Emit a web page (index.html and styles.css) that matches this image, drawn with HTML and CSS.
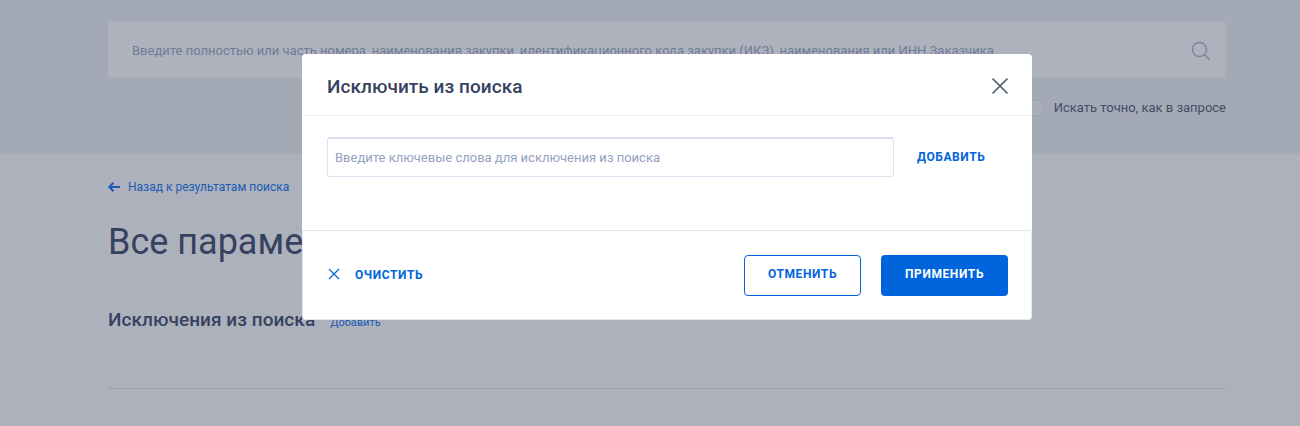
FILE: index.html
```html
<!DOCTYPE html>
<html lang="ru">
<head>
<meta charset="utf-8">
<title>Исключить из поиска</title>
<link rel="stylesheet" href="styles.css">
</head>
<body>
<header class="top">
  <div class="search">
    <span class="search-text">Введите полностью или часть номера, наименования закупки, идентификационного кода закупки (ИКЗ), наименования или ИНН Заказчика</span>
    <svg class="search-icon" width="20" height="20" viewBox="0 0 20 20" fill="none"><circle cx="8.5" cy="8.5" r="7" stroke="#7b8599" stroke-width="1.4"/><path d="M13.5 13.5L18.5 18.5" stroke="#7b8599" stroke-width="1.4"/></svg>
  </div>
  <div class="exact">
    <span class="checkbox"></span>
    <span>Искать точно, как в запросе</span>
  </div>
</header>
<main class="content">
  <a class="back">
    <svg width="12" height="10" viewBox="0 0 12 10" fill="none"><path d="M12 5H1.5M5.5 0.8L1.3 5L5.5 9.2" stroke="#1c5bb5" stroke-width="2"/></svg>
    <span>Назад к результатам поиска</span>
  </a>
  <h1 class="title">Все параметры поиска</h1>
  <div class="section">
    <h2 class="section-title">Исключения из поиска</h2>
    <a class="section-add">Добавить</a>
  </div>
  <hr class="rule">
</main>
<section class="modal">
  <div class="modal-head">
    <h3 class="modal-title">Исключить из поиска</h3>
    <svg class="modal-close" width="16" height="16" viewBox="0 0 16 16" fill="none"><path d="M0.5 0.5L15.5 15.5M15.5 0.5L0.5 15.5" stroke="#5d6679" stroke-width="1.7"/></svg>
  </div>
  <div class="modal-body">
    <div class="field">Введите ключевые слова для исключения из поиска</div>
    <a class="add">ДОБАВИТЬ</a>
  </div>
  <div class="modal-foot">
    <a class="clear">
      <svg class="clear-icon" width="12" height="12" viewBox="0 0 12 12" fill="none"><path d="M1 1L11 11M11 1L1 11" stroke="#0065dd" stroke-width="1.2"/></svg>
      <span>ОЧИСТИТЬ</span>
    </a>
    <div class="actions">
      <button class="btn btn-outline">ОТМЕНИТЬ</button>
      <button class="btn btn-solid">ПРИМЕНИТЬ</button>
    </div>
  </div>
</section>
</body>
</html>
```
FILE: styles.css
```css
* { box-sizing: border-box; }
html, body { margin: 0; height: 426px; overflow: hidden; }
body { background: #adb1bc; font-family: Roboto, "Liberation Sans", sans-serif; color: #3a4560; position: relative; }
.top { height: 154px; background: #a3a9b5; padding: 22px 74px 0 108px; }
.search { height: 56px; background: #adb2bd; display: flex; align-items: center; justify-content: space-between; padding: 0 15px 0 24px; }
.search-text { font-size: 13px; color: #6f7c97; white-space: nowrap; }
.search-icon { margin-top: 1px; }
.exact { display: flex; justify-content: flex-end; align-items: center; gap: 10px; margin-top: 21px; font-size: 13px; color: #444d65; line-height: 18px; }
.checkbox { width: 14px; height: 16px; border: 1px solid #9aa1b0; border-radius: 2px; background: #a8adb9; }
.content { padding: 24px 74px 0 108px; }
.back { display: flex; align-items: center; gap: 8px; font-size: 12px; line-height: 18px; color: #1c5bb5; }
.title { margin: 24px 0 0; font-size: 36px; font-weight: 400; line-height: 44px; color: #36425f; white-space: nowrap; }
.section { display: flex; align-items: baseline; gap: 15px; margin-top: 44px; }
.section-title { margin: 0; font-size: 19px; font-weight: 500; letter-spacing: 0.05px; line-height: 24px; color: #36425f; }
.section-add { font-size: 11px; color: #1c5bb5; }
.rule { border: 0; border-top: 1px solid #98a1b2; margin: 56px 0 0; }
.modal { position: absolute; left: 302px; top: 54px; width: 730px; height: 266px; background: #fff; border-radius: 4px; display: flex; flex-direction: column; }
.modal-head { height: 62px; border-bottom: 1px solid #eceef2; display: flex; align-items: center; justify-content: space-between; padding: 2px 24px 0 25px; }
.modal-title { margin: 2px 0 0; font-size: 19px; font-weight: 500; letter-spacing: 0.05px; color: #36425f; }
.modal-close { display: block; }
.modal-body { height: 114px; padding: 21px 0 0 25px; display: flex; align-items: flex-start; gap: 23px; }
.field { width: 567px; height: 40px; border: 1px solid #d9e2ee; border-top-width: 2px; border-radius: 3px; padding: 0 7px; font-size: 13px; line-height: 38px; color: #95a1bf; }
.add { font-size: 12px; font-weight: 700; letter-spacing: 0.6px; line-height: 40px; color: #0065dd; }
.modal-foot { flex: 1; display: flex; align-items: center; justify-content: space-between; padding: 0 23px 0 25px; border: 1px solid #e7e6f3; border-radius: 0 0 4px 4px; }
.clear { display: flex; align-items: center; gap: 15px; font-size: 12px; font-weight: 700; letter-spacing: 0.6px; color: #0065dd; }
.clear-icon { position: relative; top: -1px; }
.actions { display: flex; gap: 20px; }
.btn { height: 41px; border-radius: 4px; font: 700 12px Roboto, "Liberation Sans", sans-serif; letter-spacing: 0.6px; padding: 0 0 2px; }
.btn-outline { width: 117px; background: #fff; border: 1px solid #0065dd; color: #0065dd; }
.btn-solid { width: 127px; background: #0065dd; border: 0; color: #fff; }
```
